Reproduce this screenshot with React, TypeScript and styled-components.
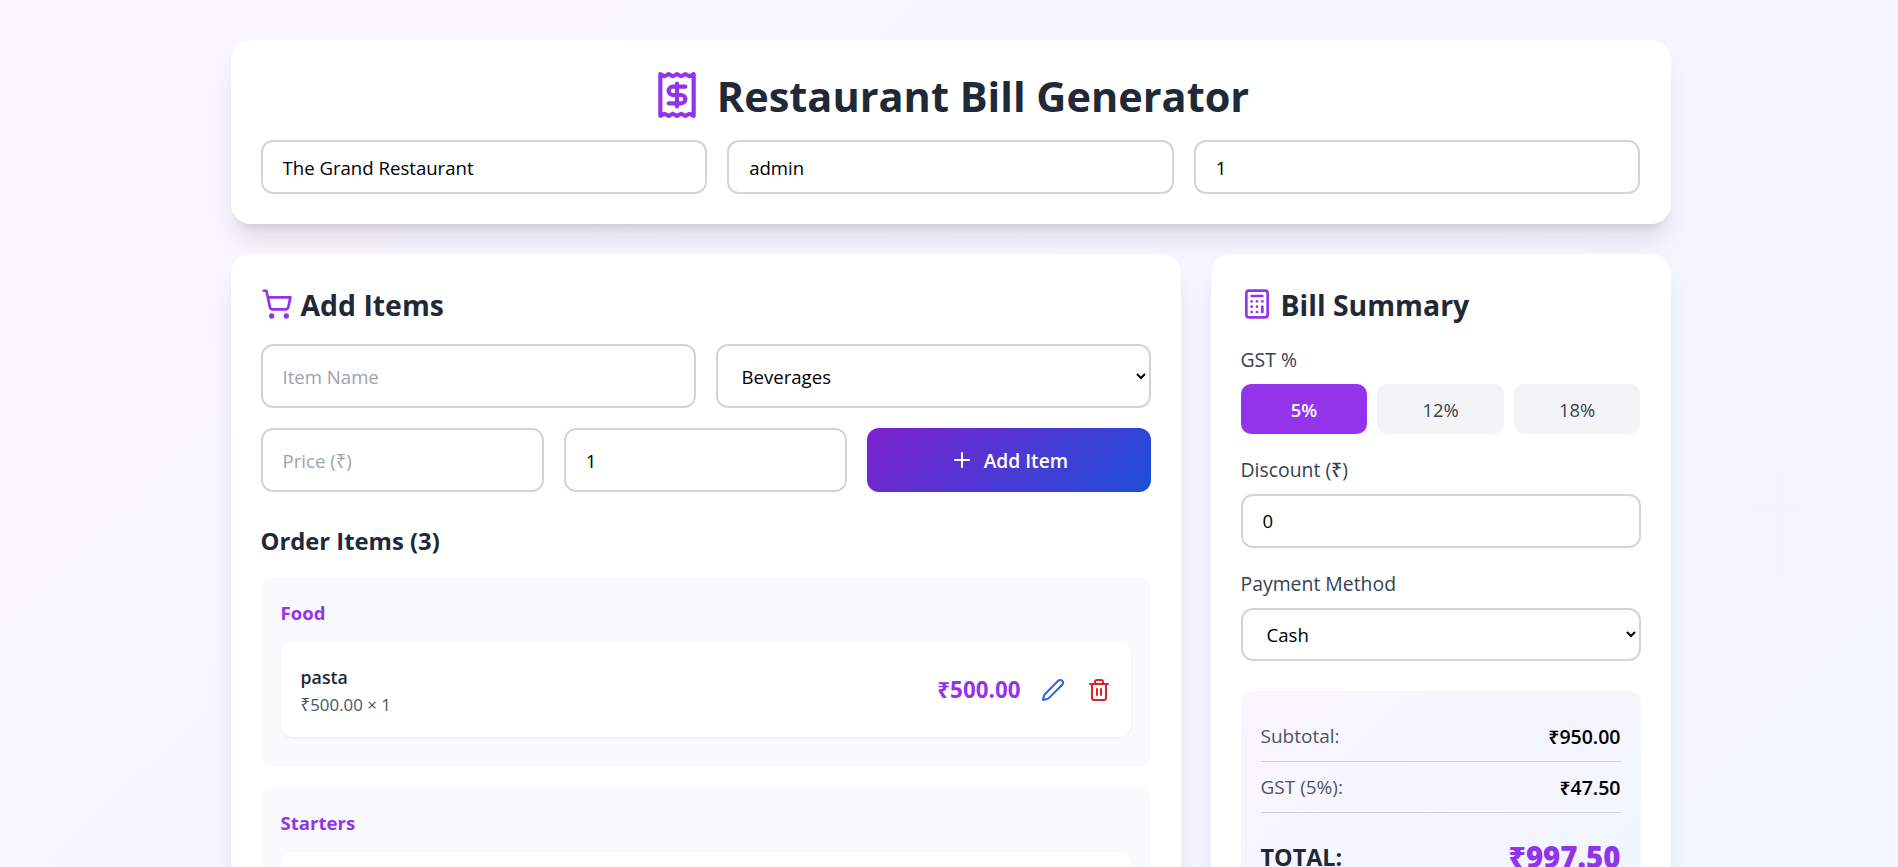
import styled, { createGlobalStyle } from 'styled-components';
import { Calculator, Pen, Plus, Receipt, ShoppingCart, Trash2 } from 'lucide-react';

const GlobalStyle = createGlobalStyle`
  html, body {
    margin: 0;
    padding: 0;
  }
  body {
    font-family: 'Open Sans', 'Noto Sans', sans-serif;
    background: linear-gradient(135deg, #faf5ff 0%, #eff6ff 100%);
    min-height: 100vh;
    color: #1f2937;
  }
  * {
    box-sizing: border-box;
  }
`;

const Page = styled.div`
  min-height: 1500px;
  padding: 40px 0 40px 3px;
`;

const Container = styled.div`
  width: 1440px;
  margin: 0 auto;
  display: flex;
  flex-direction: column;
  gap: 30px;
`;

const Card = styled.section`
  background: #fff;
  border-radius: 20px;
  padding: 30px;
  box-shadow: 0 20px 25px -5px rgba(0, 0, 0, 0.1), 0 8px 10px -6px rgba(0, 0, 0, 0.1);
`;

const Title = styled.h1`
  display: flex;
  align-items: center;
  justify-content: center;
  gap: 15px;
  height: 50px;
  margin: 0 0 20px;
  font-size: 41.5px;
  font-weight: 700;
  color: #1f2937;
  svg {
    color: #9333ea;
  }
  span {
    padding-top: 2px;
  }
`;

const HeaderFields = styled.div`
  display: grid;
  grid-template-columns: repeat(3, 1fr);
  gap: 20px;
`;

const Columns = styled.div`
  display: grid;
  grid-template-columns: repeat(3, 1fr);
  gap: 30px;
  align-items: start;
`;

const MainCard = styled(Card)`
  grid-column: span 2;
`;

const SectionTitle = styled.h2`
  display: flex;
  align-items: center;
  gap: 8px;
  height: 40px;
  margin: 0 0 20px;
  font-size: 28.4px;
  font-weight: 700;
  color: #1f2937;
  svg {
    color: #9333ea;
  }
  span {
    padding-top: 2px;
  }
`;

const Input = styled.input<{ $height?: number }>`
  width: 100%;
  height: ${(p) => p.$height ?? 54}px;
  padding: 0 20px;
  border: 2px solid #d1d5db;
  border-radius: 12px;
  background: #fff;
  color: #000;
  font-family: inherit;
  font-size: 18.6px;
  outline: none;
  &::placeholder {
    color: #9ca3af;
  }
`;

const Select = styled.select<{ $height?: number }>`
  width: 100%;
  height: ${(p) => p.$height ?? 54}px;
  padding: 0 20px;
  border: 2px solid #d1d5db;
  border-radius: 12px;
  background: #fff;
  color: #000;
  font-family: inherit;
  font-size: 18.6px;
  outline: none;
`;

const FormRow = styled.div<{ $cols: number }>`
  display: grid;
  grid-template-columns: repeat(${(p) => p.$cols}, 1fr);
  gap: 20px;
  margin-bottom: 20px;
`;

const AddButton = styled.button`
  display: flex;
  align-items: center;
  justify-content: center;
  gap: 10px;
  height: 64px;
  border: 0;
  border-radius: 12px;
  background: linear-gradient(135deg, #7e22ce, #1d4ed8);
  color: #fff;
  font-family: inherit;
  font-size: 19.2px;
  font-weight: 600;
`;

const OrderTitle = styled.h3`
  margin: 35px 0 21px;
  font-size: 23.8px;
  line-height: 29px;
  font-weight: 700;
  color: #1f2937;
`;

const Group = styled.div`
  background: #f9fafb;
  border-radius: 12px;
  padding: 20px;
  margin-bottom: 20px;
`;

const GroupName = styled.h4`
  margin: 0 0 13px;
  font-size: 18.6px;
  line-height: 32px;
  font-weight: 700;
  color: #9333ea;
`;

const ItemCard = styled.div`
  display: flex;
  align-items: center;
  justify-content: space-between;
  height: 95px;
  margin-bottom: 10px;
  padding: 20px;
  background: #fff;
  border-radius: 12px;
  box-shadow: 0 1px 3px rgba(0, 0, 0, 0.06);
`;

const ItemInfo = styled.div`
  padding-top: 2px;
`;

const ItemName = styled.div`
  font-size: 17.8px;
  line-height: 28px;
  font-weight: 600;
  color: #1f2937;
`;

const ItemMeta = styled.div`
  font-size: 16.9px;
  line-height: 27px;
  color: #4b5563;
`;

const ItemActions = styled.div`
  display: flex;
  align-items: center;
  gap: 20px;
`;

const IconGroup = styled.div`
  display: flex;
  gap: 22px;
`;

const ItemPrice = styled.span`
  font-size: 22.4px;
  font-weight: 700;
  color: #9333ea;
`;

const IconButton = styled.button<{ $color: string }>`
  display: flex;
  padding: 0;
  border: 0;
  background: none;
  color: ${(p) => p.$color};
`;

const Label = styled.div`
  margin-bottom: 8px;
  font-size: 19.4px;
  line-height: 32px;
  font-weight: 500;
  color: #374151;
`;

const Field = styled.div`
  margin-bottom: 20px;
`;

const GstOptions = styled.div`
  display: grid;
  grid-template-columns: repeat(3, 1fr);
  gap: 10px;
`;

const GstButton = styled.button<{ $active?: boolean }>`
  height: 50px;
  border: 0;
  border-radius: 10px;
  background: ${(p) => (p.$active ? '#9333ea' : '#f3f4f6')};
  color: ${(p) => (p.$active ? '#fff' : '#374151')};
  font-family: inherit;
  font-size: 18.4px;
  font-weight: ${(p) => (p.$active ? 600 : 400)};
`;

const Totals = styled.div`
  margin-top: 30px;
  padding: 20px;
  border-radius: 12px;
  background: linear-gradient(135deg, #faf5ff, #eff6ff);
`;

const TotalRow = styled.div`
  display: flex;
  align-items: center;
  justify-content: space-between;
  height: 51px;
  border-bottom: 1px solid #d1d5db;
  font-size: 19px;
  color: #4b5563;
  strong {
    font-size: 19.5px;
    font-weight: 600;
    color: #000;
  }
`;

const GrandTotal = styled.div`
  display: flex;
  align-items: center;
  justify-content: space-between;
  margin-top: 19px;
  height: 50px;
  font-size: 23.4px;
  font-weight: 700;
  color: #1f2937;
  strong {
    font-size: 29.4px;
    color: #9333ea;
  }
`;

const App = () => {
  return (
    <>
      <GlobalStyle />
      <Page>
        <Container>
          <Card as='header'>
            <Title>
              <Receipt size={50} />
              <span>Restaurant Bill Generator</span>
            </Title>
            <HeaderFields>
              <Input defaultValue='The Grand Restaurant' />
              <Input defaultValue='admin' />
              <Input type='number' defaultValue='1' />
            </HeaderFields>
          </Card>
          <Columns>
            <MainCard>
              <SectionTitle>
                <ShoppingCart size={32} />
                <span>Add Items</span>
              </SectionTitle>
              <FormRow $cols={2}>
                <Input $height={64} placeholder='Item Name' />
                <Select $height={64} defaultValue='Beverages'>
                  <option>Beverages</option>
                  <option>Food</option>
                  <option>Starters</option>
                </Select>
              </FormRow>
              <FormRow $cols={3}>
                <Input $height={64} placeholder='Price (₹)' />
                <Input $height={64} type='number' defaultValue='1' />
                <AddButton>
                  <Plus size={24} />
                  Add Item
                </AddButton>
              </FormRow>
              <OrderTitle>Order Items (3)</OrderTitle>
              <Group>
                <GroupName>Food</GroupName>
                <ItemCard>
                  <ItemInfo>
                    <ItemName>pasta</ItemName>
                    <ItemMeta>₹500.00 × 1</ItemMeta>
                  </ItemInfo>
                  <ItemActions>
                    <ItemPrice>₹500.00</ItemPrice>
                    <IconGroup>
                      <IconButton $color='#2563eb'>
                        <Pen size={24} />
                      </IconButton>
                      <IconButton $color='#dc2626'>
                        <Trash2 size={24} />
                      </IconButton>
                    </IconGroup>
                  </ItemActions>
                </ItemCard>
              </Group>
              <Group>
                <GroupName>Starters</GroupName>
                <ItemCard />
              </Group>
            </MainCard>
            <Card>
              <SectionTitle>
                <Calculator size={32} />
                <span>Bill Summary</span>
              </SectionTitle>
              <Field>
                <Label>GST %</Label>
                <GstOptions>
                  <GstButton $active>5%</GstButton>
                  <GstButton>12%</GstButton>
                  <GstButton>18%</GstButton>
                </GstOptions>
              </Field>
              <Field>
                <Label>Discount (₹)</Label>
                <Input $height={53.5} type='number' defaultValue='0' />
              </Field>
              <Field>
                <Label>Payment Method</Label>
                <Select $height={53.5} defaultValue='Cash'>
                  <option>Cash</option>
                  <option>Card</option>
                  <option>UPI</option>
                </Select>
              </Field>
              <Totals>
                <TotalRow>
                  <span>Subtotal:</span>
                  <strong>₹950.00</strong>
                </TotalRow>
                <TotalRow>
                  <span>GST (5%):</span>
                  <strong>₹47.50</strong>
                </TotalRow>
                <GrandTotal>
                  <span>TOTAL:</span>
                  <strong>₹997.50</strong>
                </GrandTotal>
              </Totals>
            </Card>
          </Columns>
        </Container>
      </Page>
    </>
  );
};

export default App;
